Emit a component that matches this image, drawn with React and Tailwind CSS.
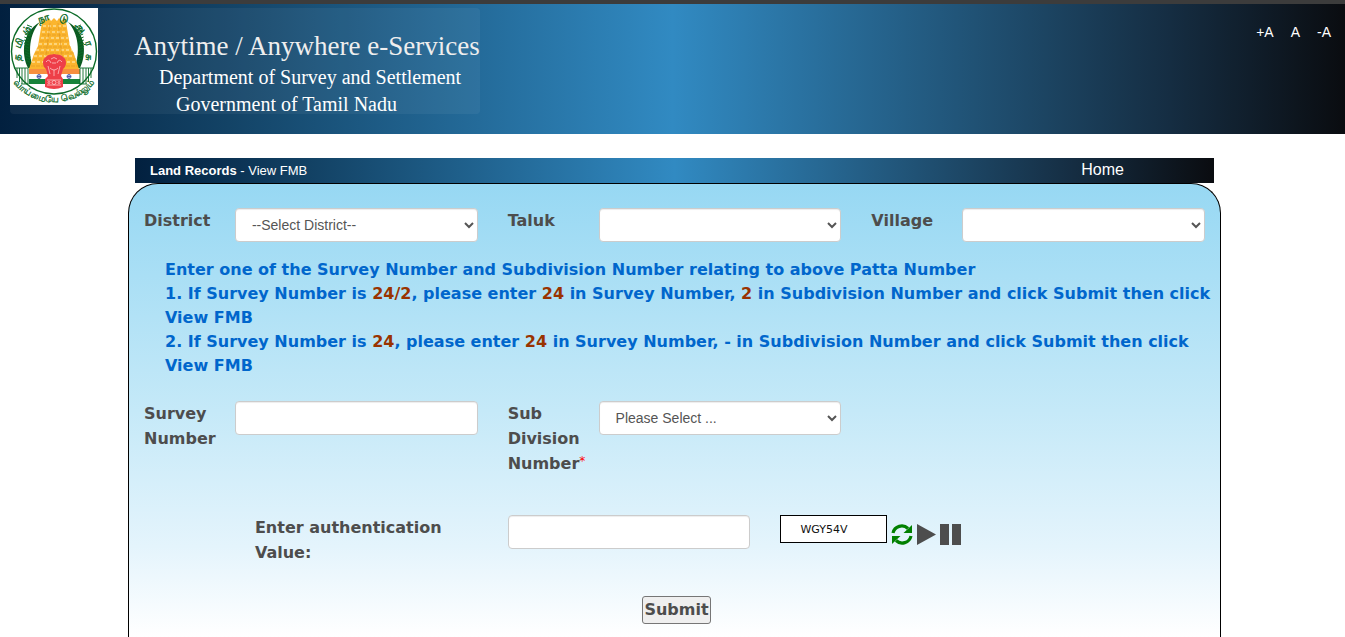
import { useState } from "react";

const LABEL = "font-['DejaVu_Sans',sans-serif] text-base leading-[25px] font-bold text-[#4d4d4d]";
const FIELD = "h-[34px] w-full rounded border border-[#ccc] bg-white font-['Liberation_Sans',sans-serif] text-sm text-[#555] shadow-[inset_0_1px_1px_rgba(0,0,0,0.075)]";

const ringLetters = [
  { text: "த", x: 8, y: 49, angle: -84 },
  { text: "மி", x: 10, y: 35, angle: -66 },
  { text: "ழ்", x: 17, y: 22, angle: -46 },
  { text: "நா", x: 34, y: 11, angle: -16 },
  { text: "டு", x: 54, y: 11, angle: 16 },
  { text: "அ", x: 70, y: 20, angle: 46 },
  { text: "ர", x: 78, y: 35, angle: 70 },
  { text: "சு", x: 79, y: 50, angle: 92 },
];

const spikes = [0, 1, 2, 3, 4, 5, 6, 7, 8, 9, 10, 11, 12];

const Emblem = () => (
  <svg viewBox="0 0 88 97" className="h-[97px] w-[88px] bg-white" role="img" aria-label="Government of Tamil Nadu emblem">
    <circle cx="44" cy="43.5" r="42.5" fill="none" stroke="#0b6b28" strokeWidth="1.4" />
    <path d="M30 14 C12 24 11 46 18 60 L23 60 C18 44 19 26 30 14 Z" fill="#0b5a20" />
    <path d="M58 14 C76 24 77 46 70 60 L65 60 C70 44 69 26 58 14 Z" fill="#0b5a20" />
    {spikes.map((i) => {
      const out = 6 * Math.sin((Math.PI * (i + 3)) / 18);
      return (
        <g key={i} stroke="#0b6b28" strokeWidth="1">
          <path d={`M${25 - out} ${19 + i * 3} l-5 -2`} />
          <path d={`M${63 + out} ${19 + i * 3} l5 -2`} />
        </g>
      );
    })}
    <path d="M32 14 L33 10 L36 13 L39 10 L41 13 L44 10 L47 13 L49 10 L52 13 L55 10 L56 14 L58 26 L60 38 L64 46 L69 61 L19 61 L24 46 L28 38 L30 26 Z" fill="#fbb52e" />
    <g stroke="#fff3c4" strokeWidth="1" strokeDasharray="3 2">
      <path d="M33 18H56M32 24H57M31 30H58M29 36H60M26 42H62M24 48H64M22 54H67" />
    </g>
    <g stroke="#dd9520" strokeWidth="0.6">
      <path d="M33 21H56M32 27H57M30 33H59M28 39H61M25 45H64M23 51H66M21 58H68" strokeDasharray="4 1" />
      <path d="M40 15L36 48M48 15L52 48" />
    </g>
    <path d="M19 61H70V66H19Z" fill="#f78f3f" />
    <path d="M19 66H70V71H19Z" fill="#fff" />
    <path d="M19 71H70V76H19Z" fill="#16833a" />
    <g fill="none" stroke="#0b6b28" strokeWidth="0.9">
      <path d="M4 60H18V76H11M7 60V70M9.500 60V74M12 60V76M15 60V76" />
      <path d="M84 60H70V76H77M81 60V70M78.500 60V74M76 60V76M73 60V76" />
    </g>
    <g fill="none" stroke="#3949a5" strokeWidth="0.8">
      <circle cx="29" cy="68.500" r="2" />
      <circle cx="59" cy="68.500" r="2" />
      <path d="M27 68.500H31M29 66.500V70.500M57 68.500H61M59 66.500V70.500" />
    </g>
    <path d="M36 49 C38 46 41 47 44 46 C47 47 51 46 53 49 C57 51 57 58 53 61 L51 68 L53 71 L53 79 Q44 83 35 79 L35 71 L38 68 L36 61 C32 58 32 51 36 49 Z" fill="#ee3f48" />
    <g fill="none" stroke="#ffd9d9" strokeWidth="0.7">
      <path d="M36 54 Q39 50 41 55 M47 55 Q49 50 52 54 M41 51 Q44 48 47 51 M42 55H46 M40 60 Q44 64 48 60 M38 58L40 66 M50 58L48 66 M44 62V68 M37 72H51 M37 77H51" />
      <circle cx="44" cy="74.500" r="2" />
      <circle cx="39" cy="74.500" r="1" />
      <circle cx="49" cy="74.500" r="1" />
    </g>
    {ringLetters.map((l) => (
      <text key={l.text} x={l.x} y={l.y} fontSize="10" fill="#0b6b28" stroke="#0b6b28" strokeWidth="0.4" textAnchor="middle" dominantBaseline="middle" className="font-['Noto_Sans',sans-serif]" transform={`rotate(${l.angle} ${l.x} ${l.y})`}>
        {l.text}
      </text>
    ))}
    <path id="motto" d="M4 75 A51 51 0 0 0 84 75" fill="none" />
    <text fontSize="9" fill="#0b6b28" stroke="#0b6b28" strokeWidth="0.3" className="font-['Noto_Sans',sans-serif]">
      <textPath href="#motto" startOffset="50%" textAnchor="middle">வாய்மையே வெல்லும்</textPath>
    </text>
  </svg>
);

const Header = () => (
  <header className="flex items-start justify-between border-t-4 border-[#3c3c3c] bg-[linear-gradient(to_right,#02203f,#134366_17%,#318ac2_50%,#152d42_87%,#0a0c10)] pt-1 pr-[14px] pb-5 pl-[10px] text-white">
    <div className="flex h-[106px] rounded bg-white/5">
      <Emblem />
      <div className="ml-9 pt-5 font-['Liberation_Serif',serif]">
        <h1 className="text-[27px] leading-[36px] text-[#eee]">Anytime / Anywhere e-Services</h1>
        <p className="pl-[25px] text-xl leading-[27px]">Department of Survey and Settlement</p>
        <p className="pl-[42px] text-xl leading-[27px]">Government of Tamil Nadu</p>
      </div>
    </div>
    <nav className="flex gap-[17px] pt-[14px] font-['Liberation_Sans',sans-serif] text-sm leading-5">
      <a href="#larger">+A</a>
      <a href="#normal">A</a>
      <a href="#smaller">-A</a>
    </nav>
  </header>
);

const SelectField = ({ id, label, placeholder, required }) => (
  <>
    <label htmlFor={id} className={`${LABEL} col-span-1 pl-[15px]`}>
      {label}
      {required && <sup className="top-[-4px] text-xs leading-none font-normal text-[#ff0000]">*</sup>}
    </label>
    <div className="col-span-3 px-[15px]">
      <select id={id} className={`${FIELD} px-3`}>
        <option>{placeholder}</option>
      </select>
    </div>
  </>
);

const Num = ({ children }) => <span className="text-[#993300]">{children}</span>;

const App = () => {
  const [survey, setSurvey] = useState("");
  const [captcha, setCaptcha] = useState("");

  return (
    <div className="min-h-screen bg-white">
      <Header />
      <main className="mt-6 pr-[124px] pl-32">
        <div className="mx-[7px] flex h-[25px] justify-between bg-[linear-gradient(to_right,#02203f,#134366_17%,#318ac2_50%,#152d42_87%,#0a0c10)] pr-[90px] pl-[15px] font-['Liberation_Sans',sans-serif] text-white">
          <h2 className="text-[13px] leading-[25px]"><b>Land Records</b> - View FMB</h2>
          <a href="#home" className="text-base leading-[23px]">Home</a>
        </div>
        <form className="rounded-t-[30px] border border-b-0 border-black bg-[linear-gradient(to_bottom,#97d8f3,#c5e9f8_50%,#e4f4fc_80%,#fff)] pt-6 pb-[13px]" onSubmit={(e) => e.preventDefault()}>
          <div className="grid grid-cols-12">
            <SelectField id="district" label="District" placeholder="--Select District--" />
            <SelectField id="taluk" label="Taluk" placeholder="" />
            <SelectField id="village" label="Village" placeholder="" />
          </div>
          <div className="mt-4 pl-9 font-['DejaVu_Sans',sans-serif] text-base leading-6 font-bold text-[#0066cc]">
            <p>Enter one of the Survey Number and Subdivision Number relating to above Patta Number</p>
            <p>1. If Survey Number is <Num>24/2</Num>, please enter <Num>24</Num> in Survey Number, <Num>2</Num> in Subdivision Number and click Submit then click View FMB</p>
            <p>2. If Survey Number is <Num>24</Num>, please enter <Num>24</Num> in Survey Number, - in Subdivision Number and click Submit then click View FMB</p>
          </div>
          <div className="mt-[23px] grid grid-cols-12">
            <label htmlFor="survey" className={`${LABEL} col-span-1 pl-[15px]`}>Survey Number</label>
            <div className="col-span-3 px-[15px]">
              <input id="survey" type="text" value={survey} onChange={(e) => setSurvey(e.target.value)} className={`${FIELD} px-3`} />
            </div>
            <SelectField id="subdivision" label="Sub Division Number" placeholder="Please Select ..." required />
          </div>
          <div className="mt-[39px] grid grid-cols-12">
            <label htmlFor="captcha" className={`${LABEL} col-span-3 col-start-2 pr-[15px] pl-[35px]`}>Enter authentication Value:</label>
            <div className="col-span-3 px-[15px]">
              <input id="captcha" type="text" value={captcha} onChange={(e) => setCaptcha(e.target.value)} className={`${FIELD} px-3`} />
            </div>
            <div className="col-span-4 flex items-start pl-[15px]">
              <div className="h-7 w-[107px] border border-black bg-white pl-[19px] font-['DejaVu_Sans',sans-serif] text-[11px] leading-7 text-[#111]">WGY54V</div>
              <button type="button" aria-label="Refresh" className="mt-[9px] ml-1">
                <svg viewBox="0 0 22 22" className="size-[22px]">
                  <path d="M2 9A9 9 0 0 1 17 4.500M20 12A9 9 0 0 1 5 16.500" fill="none" stroke="#008000" strokeWidth="3.200" />
                  <path d="M21 1V9H12.500ZM1 20V12H9.500Z" fill="#008000" />
                </svg>
              </button>
              <button type="button" aria-label="Play" className="mt-[9px] ml-1">
                <svg viewBox="0 0 19 22" className="h-[22px] w-[19px]" fill="#4d4d4d"><path d="M0 0L19 10.500L0 21Z" /></svg>
              </button>
              <button type="button" aria-label="Pause" className="mt-[9px] ml-1">
                <svg viewBox="0 0 21 22" className="h-[22px] w-[21px]" fill="#4d4d4d"><path d="M0 0H9V21H0ZM12 0H21V21H12Z" /></svg>
              </button>
            </div>
          </div>
          <div className="mt-[31px] flex justify-center pl-1">
            <button type="submit" className="h-7 rounded-[3px] border border-[#767676] bg-[#efefef] px-px font-['DejaVu_Sans',sans-serif] text-base leading-6 font-bold text-[#4d4d4d]">Submit</button>
          </div>
        </form>
      </main>
    </div>
  );
};

export default App;
